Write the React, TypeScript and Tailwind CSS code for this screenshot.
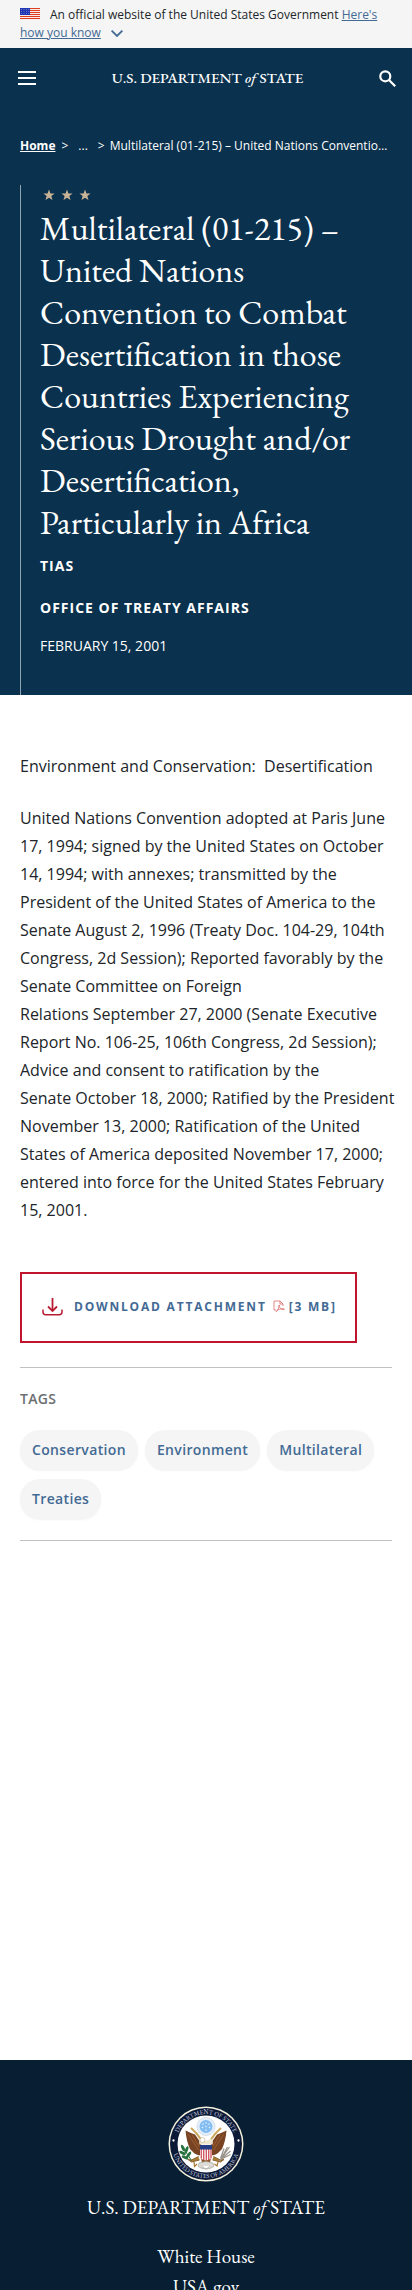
import React from "react";

const serif = "font-['EB_Garamond','Liberation_Serif',serif]";

const tags = ["Conservation", "Environment", "Multilateral", "Treaties"];

function FlagIcon() {
  return (
    <svg viewBox="0 0 20 12" className="mr-[10px] inline-block h-3 w-5 align-[-1px]" aria-hidden="true">
      <rect width="20" height="12" fill="#fff" />
      {[0, 2, 4, 6, 8, 10].map((y) => (
        <rect key={y} y={y} width="20" height="1.1" fill="#db3e1f" />
      ))}
      <rect width="10" height="7" fill="#1e33b1" />
      {[1.2, 3.4, 5.6].map((y) =>
        [1.5, 4, 6.5, 8.8].map((x) => <circle key={`${x}-${y}`} cx={x} cy={y} r="0.45" fill="#cfd4f2" />)
      )}
    </svg>
  );
}

function Wordmark({ className }: { className: string }) {
  return (
    <span className={`${serif} whitespace-nowrap text-white ${className}`}>
      U.S. DEPARTMENT <em>of</em> STATE
    </span>
  );
}

function Star() {
  return (
    <svg viewBox="0 0 24 24" className="h-3 w-3" fill="#c9b397" aria-hidden="true">
      <path d="M12 1l2.9 7.8 8.3.3-6.5 5.1 2.3 8-7-4.6-7 4.6 2.3-8L.8 9.100l8.300-.300z" />
    </svg>
  );
}

function DownloadIcon() {
  return (
    <svg viewBox="0 0 21 18" className="h-[18px] w-[21px]" fill="none" stroke="#b81c33" strokeWidth="1.800" aria-hidden="true">
      <path d="M10.500 0v12" />
      <path d="M6 8.500l4.500 4.500L15 8.500" />
      <path d="M1 11.500v2.500q0 2.700 2.700 2.700h13.600q2.700 0 2.700-2.700v-2.500" strokeWidth="1.500" />
    </svg>
  );
}

function PdfIcon() {
  return (
    <svg viewBox="0 0 12 13" className="h-[13px] w-3" fill="none" stroke="#dd6b6b" strokeWidth="0.800" aria-hidden="true">
      <path d="M3 10H1V1h6l3 3v2M7 1v3h3" />
      <path d="M3.500 11.500C5 10 6 7.500 5.800 5.500c0-1 .9-.8.7.2C6 7.500 8.500 10 11 9.600c.8-.2.4-1-.6-1C8 8.500 5 9.500 3.700 10.700c-.7.8-.6 1.300-.2.8z" />
    </svg>
  );
}

function Seal() {
  return (
    <svg viewBox="0 0 152 152" className="h-[76px] w-[76px]" role="img" aria-label="Seal of the Department of State">
      <defs>
        <path id="sealTop" d="M16.500 76a59.500 59.500 0 0 1 119 0" />
        <path id="sealBottom" d="M8 76a68 68 0 0 0 136 0" />
      </defs>
      <circle cx="76" cy="76" r="75" fill="#f4f1dc" />
      <circle cx="76" cy="76" r="72" fill="#0c1a38" />
      <circle cx="76" cy="76" r="57" fill="#fff" />
      <text fill="#d5d9e0" fontSize="12.500" className={serif} textAnchor="middle">
        <textPath href="#sealTop" startOffset="50%">DEPARTMENT OF STATE</textPath>
      </text>
      <text fill="#d5d9e0" fontSize="12.500" className={serif} textAnchor="middle">
        <textPath href="#sealBottom" startOffset="50%">UNITED STATES OF AMERICA</textPath>
      </text>
      <circle cx="11" cy="69" r="2.300" fill="#fff" />
      <circle cx="141" cy="69" r="2.300" fill="#fff" />
      <circle cx="76" cy="41" r="18" fill="#e3eefa" stroke="#aebccb" strokeWidth="1.500" strokeDasharray="2 1.500" />
      <circle cx="76" cy="41" r="13" fill="#83bdf1" />
      <g fill="#e9f4ff">
        <circle cx="70" cy="36" r="1.500" /><circle cx="76" cy="34" r="1.500" /><circle cx="82" cy="36" r="1.500" />
        <circle cx="69" cy="43" r="1.500" /><circle cx="76" cy="41" r="1.500" /><circle cx="83" cy="43" r="1.500" /><circle cx="76" cy="48" r="1.500" />
      </g>
      <path d="M46 44q13 11 20 23M106 44Q93 55 86 67" stroke="#cba75b" strokeWidth="4" fill="none" />
      <path d="M35 49l11 5 8 3 11 16 4 12-1 14q-13 0-19-8l-5-5q-7-15-9-37z" fill="#784323" />
      <path d="M117 49l-11 5-8 3-11 16-4 12 1 14q13 0 19-8l5-5q7-15 9-37z" fill="#784323" />
      <path d="M41 57l20 31M48 57l14 24M111 57L91 88M104 57L90 81" stroke="#a9693a" strokeWidth="1.500" />
      <path d="M63 77q-3-10 5-11l8 4 8-4q8 1 5 11z" fill="#efe7d0" />
      <circle cx="69" cy="68" r="5" fill="#fff" stroke="#b79f6c" strokeWidth="1" />
      <path d="M61 101l-14 7-7-1 7 5 16-4M91 101l14 7 7-1-7 5-16-4" fill="#a87b37" stroke="#8e642e" strokeWidth="2" />
      <path d="M66 104h20l-2 10h-16z" fill="#8b5629" />
      <path d="M64 78h24v22q0 7-12 9-12-2-12-9z" fill="#fff" />
      <path d="M66.500 84v21M71.500 84v24M76.500 84v25M81.500 84v24M86 84v21" stroke="#c73a46" strokeWidth="2.300" />
      <path d="M64 78h24v9H64z" fill="#243d83" />
      <g fill="#28733f">
        <ellipse cx="30" cy="84" rx="3" ry="7" transform="rotate(-25 30 84)" />
        <ellipse cx="37" cy="88" rx="3" ry="8" transform="rotate(20 37 88)" />
        <ellipse cx="29" cy="94" rx="3" ry="7" transform="rotate(-60 29 94)" />
        <ellipse cx="41" cy="98" rx="3" ry="8" transform="rotate(35 41 98)" />
        <ellipse cx="34" cy="103" rx="3" ry="7" transform="rotate(-65 34 103)" />
        <path d="M29 82l18 27" stroke="#28733f" strokeWidth="2" />
      </g>
      <path d="M123 82l-20 28M119 82l-13 24M125 90l-19 16M112 85l-7 20M125 97l-20 10" stroke="#99948c" strokeWidth="2.500" />
      <path d="M52 112l1 9 5-5M100 112l-2 8-5-4" stroke="#a87b37" strokeWidth="2.500" fill="none" />
      <path d="M62 114q14-6 28 0l2 7q-16 10-32 0zM67 120l9 6 9-6" fill="#dddcd6" stroke="#9d9a92" strokeWidth="1.200" />
    </svg>
  );
}

export default function App() {
  return (
    <div className="min-h-screen bg-white font-['Open_Sans',sans-serif] text-[#212529]">
      <div className="bg-[#f5f5f5] px-5 py-[6px] text-xs leading-[18px]">
        <FlagIcon />
        An official website of the United States Government{" "}
        <a href="#how-you-know" className="text-[#436a94]">
          <span className="underline">Here's how you know</span>
          <svg viewBox="0 0 12 7" className="ml-[10px] inline-block h-[7px] w-3" fill="none" stroke="#436a94" strokeWidth="1.800" aria-hidden="true">
            <path d="M.6.600L6 6 11.400.600" />
          </svg>
        </a>
      </div>

      <div className="bg-[#0a314d] text-white">
        <header className="flex h-[60px] items-center justify-between pr-4 pl-[18px]">
          <button type="button" aria-label="Menu" className="flex flex-col gap-1">
            <span className="h-[2px] w-[18px] bg-white" />
            <span className="h-[2px] w-[18px] bg-white" />
            <span className="h-[2px] w-[18px] bg-white" />
          </button>
          <a href="#home" className="flex"><Wordmark className="text-[15px] leading-6 font-medium" /></a>
          <button type="button" aria-label="Search">
            <svg viewBox="0 0 17 17" className="h-[17px] w-[17px]" fill="none" stroke="#fff" strokeWidth="2.200" aria-hidden="true">
              <circle cx="6.300" cy="6.300" r="5" />
              <path d="M10 10l6.200 6.200" />
            </svg>
          </button>
        </header>

        <nav aria-label="Breadcrumb" className="px-5 pt-7 text-xs leading-5">
          <ol className="flex">
            <li><a href="#home" className="font-bold underline">Home</a></li>
            <li className="ml-[6px]">&gt;</li>
            <li className="ml-[10px]">...</li>
            <li className="ml-[10px]">&gt;</li>
            <li className="ml-[5px] min-w-0 truncate">
              Multilateral (01-215) – United Nations Convention to Combat Desertification
            </li>
          </ol>
        </nav>

        <div className="px-5 pt-[29px]">
          <div className="border-l border-[#8fa3b1] pb-[39px] pl-[19px]">
            <div className="flex gap-[6px] pt-1 pl-[3px]">
              <Star />
              <Star />
              <Star />
            </div>
            <h1 className={`${serif} pt-[6px] text-[34px] leading-[42px]`}>
              Multilateral (01-215) – <br />United Nations <br />Convention to Combat <br />
              Desertification in those <br />Countries Experiencing <br />Serious Drought and/or <br />
              Desertification, <br />Particularly in Africa
            </h1>
            <p className="pt-[13px] text-sm leading-5 font-bold tracking-[1px]">TIAS</p>
            <p className="pt-[22px] text-sm leading-5 font-bold tracking-[1px]">OFFICE OF TREATY AFFAIRS</p>
            <p className="pt-[18px] text-sm leading-5">FEBRUARY 15, 2001</p>
          </div>
        </div>
      </div>

      <main className="px-5 pt-[57px]">
        <div className="-mr-3 flex flex-col gap-6 text-base leading-7">
          <p>Environment and Conservation:&nbsp; Desertification</p>
          <p>
            United Nations Convention adopted at Paris June <br />
            17, 1994; signed by the United States on October <br />
            14, 1994; with annexes; transmitted by the <br />
            President of the United States of America to the <br />
            Senate&nbsp;August 2, 1996 (Treaty Doc. 104-29, 104th <br />
            Congress, 2d Session); Reported favorably by the <br />
            Senate Committee on Foreign <br />
            Relations&nbsp;September 27, 2000 (Senate Executive <br />
            Report No. 106-25, 106th Congress, 2d Session); <br />
            Advice and consent to ratification by the <br />
            Senate&nbsp;October 18, 2000; Ratified by the President <br />
            November 13, 2000; Ratification of the United <br />
            States of America deposited November 17, 2000; <br />
            entered into force for the United States February <br />
            15, 2001.
          </p>
        </div>

        <a
          href="#attachment"
          className="mt-12 flex h-[71px] w-fit items-center border-2 border-[#c0142f] pr-[18px] pb-[2px] pl-5 text-xs leading-5 font-bold tracking-[0.15em] whitespace-nowrap text-[#436a94]"
        >
          <DownloadIcon />
          <span className="ml-[11px]">DOWNLOAD ATTACHMENT</span>
          <span className="mr-1 ml-[6px]"><PdfIcon /></span>
          <span>[3 MB]</span>
        </a>

        <section className="mt-6 border-y border-[#bfc1c3] pt-[21px] pb-[21px]">
          <h2 className="text-sm leading-5 font-semibold tracking-wide text-[#6b6e70]">TAGS</h2>
          <ul className="mt-[21px] flex flex-wrap gap-x-[7px] gap-y-[9px]">
            {tags.map((tag) => (
              <li key={tag}>
                <a
                  href={`#${tag}`}
                  className="flex h-10 items-center rounded-full bg-[#f5f5f5] px-3 text-sm font-semibold tracking-wide text-[#436a94] shadow-xs"
                >
                  {tag}
                </a>
              </li>
            ))}
          </ul>
        </section>
      </main>

      <footer className="mt-[519px] flex flex-col items-center bg-[#081f33] pt-[46px] text-white">
        <Seal />
        <Wordmark className="mt-[11px] text-[19px] leading-[30px]" />
        <ul className={`${serif} mt-[19px] text-center text-[19px] leading-[30px]`}>
          <li><a href="#white-house">White House</a></li>
          <li><a href="#usa-gov">USA.gov</a></li>
        </ul>
      </footer>
    </div>
  );
}
